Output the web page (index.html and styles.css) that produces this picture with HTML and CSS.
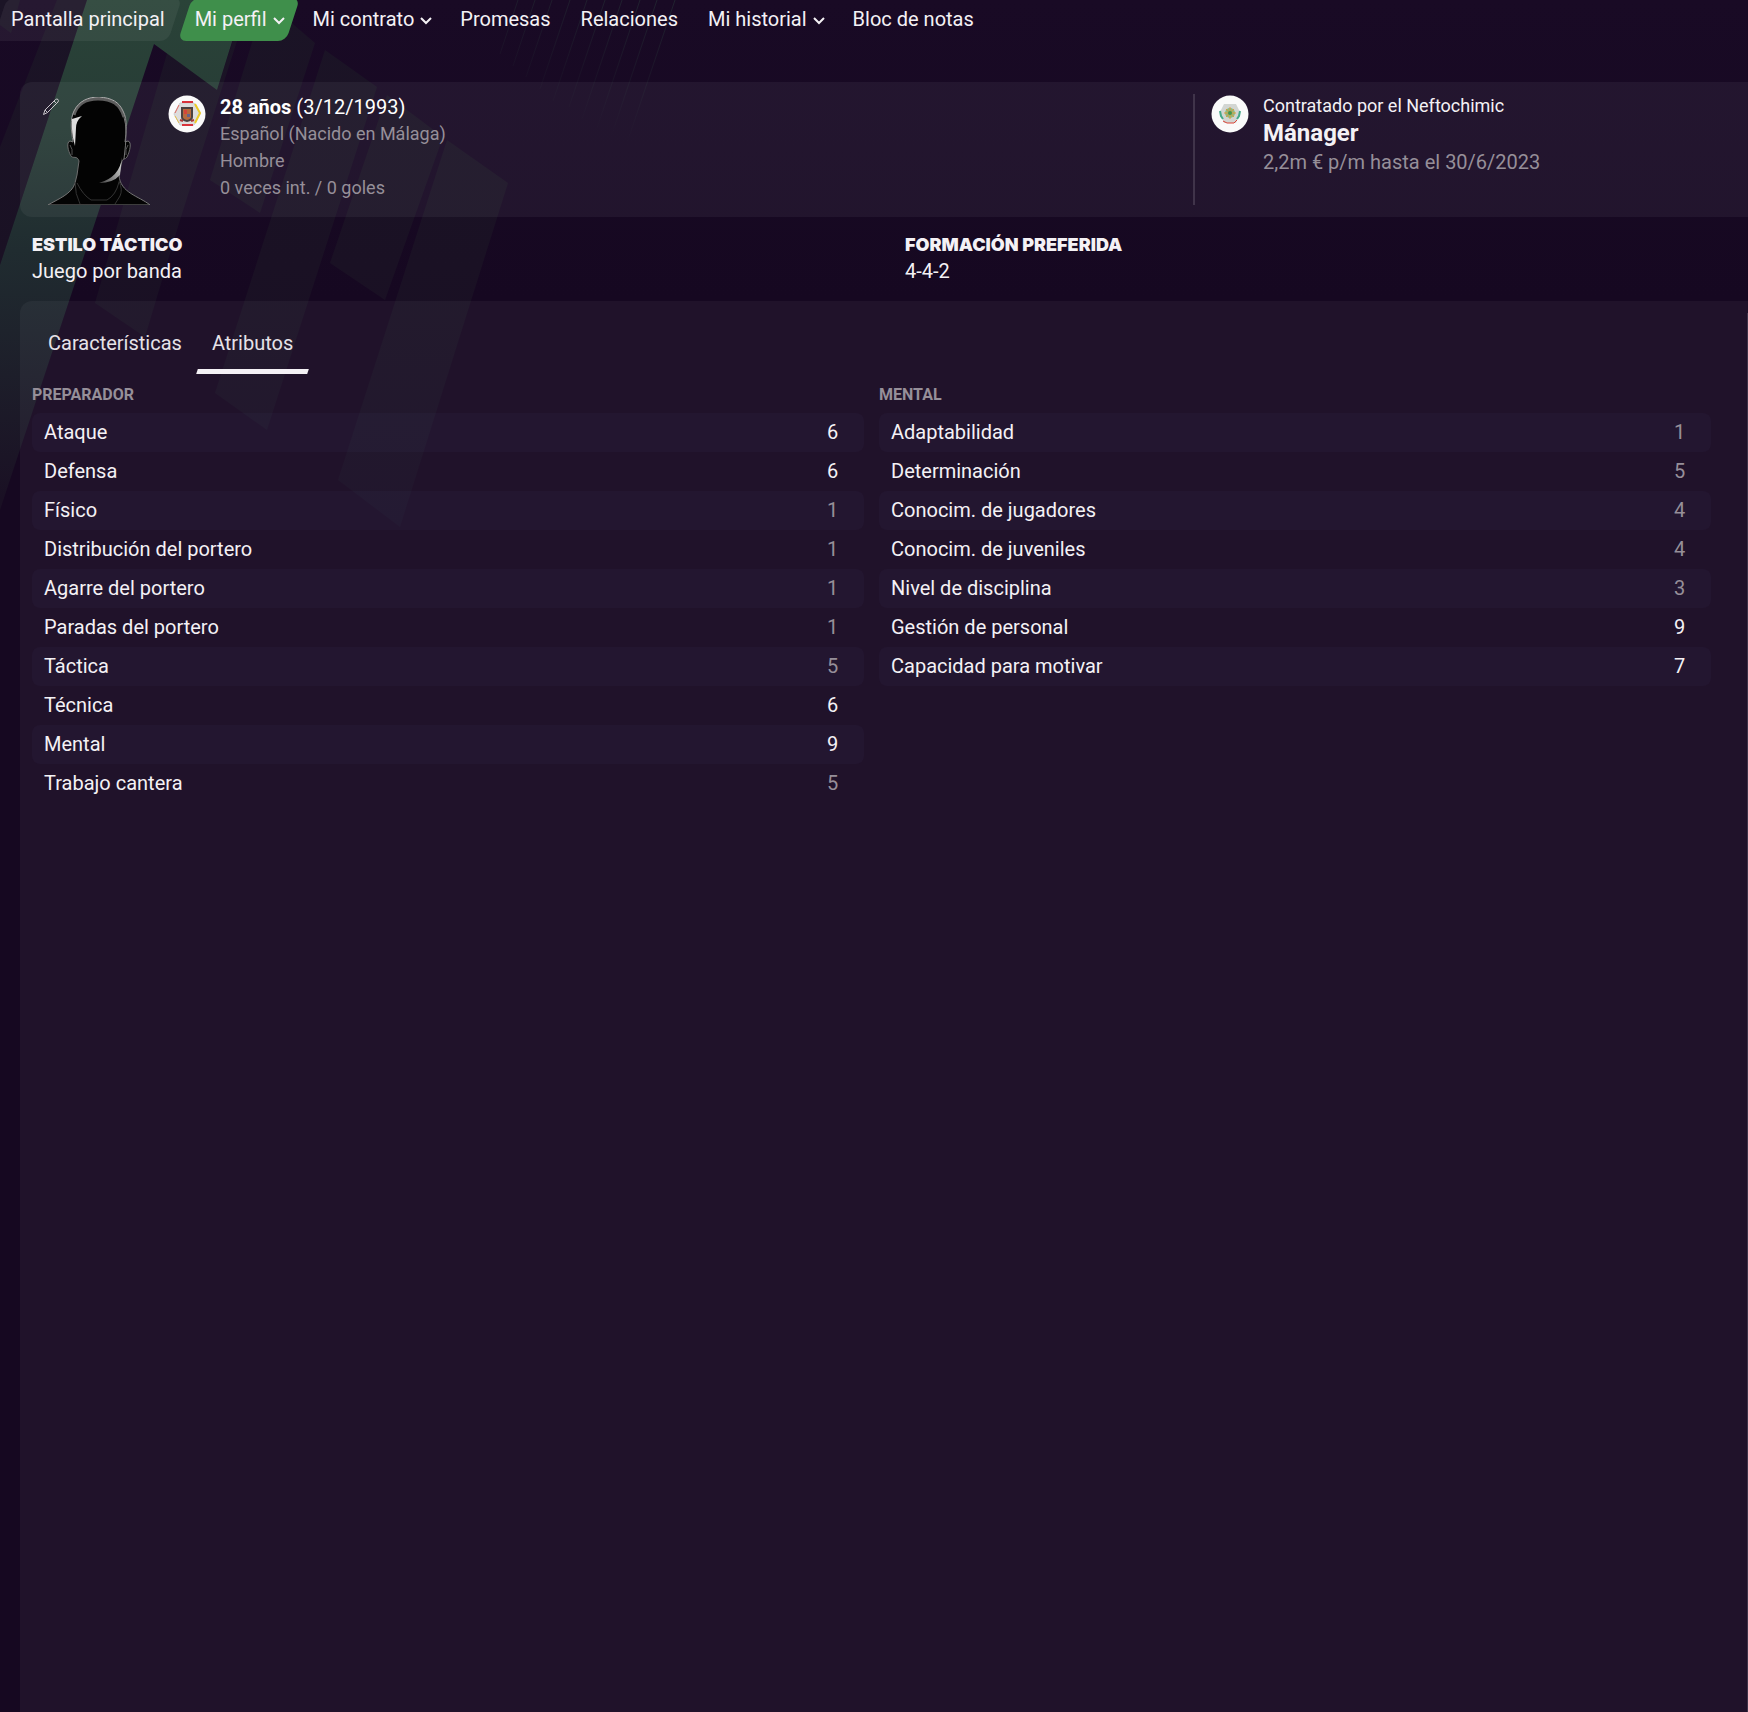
FILE: index.html
```html
<!DOCTYPE html>
<html lang="es">
<head>
    <meta charset="UTF-8">
    <meta name="viewport" content="width=device-width, initial-scale=1.0">
    <title>Mi perfil</title>
    <link rel="stylesheet" href="styles.css">
</head>
<body>
    <svg class="backdrop" width="700" height="560" viewBox="0 0 700 560" aria-hidden="true">
        <defs>
            <linearGradient id="green" gradientUnits="userSpaceOnUse" x1="0" y1="0" x2="0" y2="500">
                <stop offset="0" stop-color="#2a4338"/>
                <stop offset="0.25" stop-color="#273c36"/>
                <stop offset="0.5" stop-color="#202c30"/>
                <stop offset="1" stop-color="#1a1024"/>
            </linearGradient>
            <linearGradient id="bands" gradientUnits="userSpaceOnUse" x1="0" y1="0" x2="0" y2="530">
                <stop offset="0" stop-color="#1b1426"/>
                <stop offset="0.5" stop-color="#1a1124"/>
                <stop offset="1" stop-color="#180c24"/>
            </linearGradient>
            <linearGradient id="lines" gradientUnits="userSpaceOnUse" x1="675" y1="0" x2="627" y2="143">
                <stop offset="0" stop-color="#20222f"/>
                <stop offset="1" stop-color="#20222f" stop-opacity="0"/>
            </linearGradient>
        </defs>
        <g fill="url(#bands)">
            <path d="M0 0H20L11 33 0 25z"/>
            <path d="M57 0H87L0 265V147z"/>
            <path d="M168 50L217 90 246 0H250L180 220 145 337 95 303z"/>
            <path d="M265 0L315 43 260 213 210 180z"/>
            <path d="M325 50L377 87 267 430 215 393z"/>
            <path d="M387 95L443 137 385 300 330 263z"/>
            <path d="M447 140L508 183 400 527 338 480z"/>
        </g>
        <path fill="url(#green)" d="M87 0H245L217 90 154 44 0 510V265z"/>
        <g stroke="url(#lines)" stroke-width="1">
            <path d="M675 0l-48 143M657 0l-46 137M640 0l-44 131M622 0l-40 119M605 0l-36 107M587 0l-34 101M570 0l-30 89M552 0l-26 77M535 0l-22 66M518 0l-18 54"/>
        </g>
    </svg>

    <div class="page">
        <nav class="menu">
            <a class="menu-item visited" href="#">Pantalla principal</a>
            <a class="menu-item drop active" href="#">Mi perfil <svg class="chevron" viewBox="0 0 12 8"><path d="M1 1l5 5 5-5"/></svg></a>
            <a class="menu-item drop" href="#">Mi contrato <svg class="chevron" viewBox="0 0 12 8"><path d="M1 1l5 5 5-5"/></svg></a>
            <a class="menu-item" href="#">Promesas</a>
            <a class="menu-item" href="#">Relaciones</a>
            <a class="menu-item drop" href="#">Mi historial <svg class="chevron" viewBox="0 0 12 8"><path d="M1 1l5 5 5-5"/></svg></a>
            <a class="menu-item" href="#">Bloc de notas</a>
        </nav>

        <header class="profile">
            <div class="person">
                <div class="portrait">
                    <button class="edit" type="button" aria-label="Editar">
                        <svg viewBox="0 0 18 18"><path d="M1.500 16.500l1.500-4.500L13.500 1.500q1.500-1 2.500 0t0 2.500L5.500 14.500zM3 12l2.500 2.500M12 3l2.500 2.500"/></svg>
                    </button>
                    <svg class="face" viewBox="0 0 102 108" aria-hidden="true">
                        <defs>
                            <linearGradient id="rim" x1="0" y1="0" x2="0" y2="1">
                                <stop offset="0" stop-color="#bbb"/>
                                <stop offset="0.5" stop-color="#666"/>
                                <stop offset="1" stop-color="#777"/>
                            </linearGradient>
                            <linearGradient id="jaw" x1="1" y1="0" x2="0" y2="1">
                                <stop offset="0" stop-color="#eee"/>
                                <stop offset="1" stop-color="#444"/>
                            </linearGradient>
                        </defs>
                        <path d="M0 108C10 102 24 97 27 86L29 78 31 64C29 58 25 62 23 59 20 54 18 45 22 44L25 45C23 33 22 22 26 14 31 4 40 0 51 0 64 1 71 5 75 14 80 23 78 36 77 45L80 44C84 45 82 54 79 60 77 63 75 61 74 64L71 78C72 96 91 99 102 108z" fill="#030303" stroke="url(#rim)" stroke-width="1"/>
                        <path d="M26 18C29 7 38 2 50 2 64 2 72 7 76 20" fill="none" stroke="#999" stroke-width="3" opacity=".6"/>
                        <path d="M24 22l10-3q-6 5-6 12l-1 18q-4-13-3-27z" fill="#ddd"/>
                        <path d="M74 60q-2 20-23 26 14 0 21-8z" fill="url(#jaw)"/>
                        <path d="M76 20q4 12 0 42" fill="none" stroke="#777" stroke-width="1"/>
                        <path d="M22 48q3 4 2 10M80 48q-3 4-2 10" fill="none" stroke="#555" stroke-width="1"/>
                        <path d="M27 85q0 12 5 22M71 84q4 9 1 15l-5 8M29 86q6 12 14 17h16q9-5 12-18" fill="none" stroke="#333" stroke-width="1"/>
                    </svg>
                </div>
                <svg class="badge" viewBox="0 0 38 38" aria-hidden="true">
                    <circle cx="19" cy="19" r="18.500" fill="#fafafa"/>
                    <path d="M12 8h14l6 11-6 11H12L6 19z" fill="#ddd" stroke="#ccc" stroke-width="1"/>
                    <path d="M14 7h11M14 30h11" stroke="#d8323a" stroke-width="2"/>
                    <path d="M27 9l5 9-5 10" fill="none" stroke="#eccb28" stroke-width="2"/>
                    <path d="M11 10l-4 8" stroke="#e06a62" stroke-width="1"/>
                    <path d="M7 21l4 7" stroke="#e2be4c" stroke-width="1"/>
                    <path d="M13 12h12v10q0 4-6 5-6-1-6-5z" fill="#4b4140"/>
                    <path d="M15 14h8v8q0 2-4 3-4-1-4-3z" fill="#b66a3e"/>
                    <path d="M16 15h3v4h-3z" fill="#d4453a"/>
                    <path d="M19 19h3v3h-3z" fill="#66618c"/>
                    <path d="M12 25l3 1M26 25l-3 1" stroke="#a93a35" stroke-width="2"/>
                </svg>
                <div class="details">
                    <p class="age"><strong>28 años</strong> (3/12/1993)</p>
                    <p>Español (Nacido en Málaga)</p>
                    <p>Hombre</p>
                    <p>0 veces int. / 0 goles</p>
                </div>
            </div>
            <div class="contract">
                <svg class="badge" viewBox="0 0 38 38" aria-hidden="true">
                    <circle cx="19" cy="19" r="18.500" fill="#fafafa"/>
                    <path d="M13 9h12l4 8-4 11H13L9 17z" fill="#d2d5d2"/>
                    <path d="M9 16l1 5 2 3M29 16l-1 5-2 3" fill="none" stroke="#45a98a" stroke-width="2"/>
                    <path d="M12 26l4 2h7l3-3" fill="none" stroke="#dc4438" stroke-width="1"/>
                    <circle cx="19" cy="18" r="5" fill="#8fb97f"/>
                    <path d="M19 12v12M13 18h12M15 14l8 8M23 14l-8 8" stroke="#dd9c3b" stroke-width="1"/>
                    <circle cx="19" cy="18" r="2" fill="#3d9655"/>
                </svg>
                <div class="job">
                    <p>Contratado por el Neftochimic</p>
                    <p class="role">Mánager</p>
                    <p class="wage">2,2m € p/m hasta el 30/6/2023</p>
                </div>
            </div>
        </header>

        <section class="style">
            <div>
                <h2>ESTILO TÁCTICO</h2>
                <p>Juego por banda</p>
            </div>
            <div>
                <h2>FORMACIÓN PREFERIDA</h2>
                <p>4-4-2</p>
            </div>
        </section>

        <main class="panel">
            <div class="tabs" role="tablist">
                <button class="tab" type="button" role="tab">Características</button>
                <button class="tab selected" type="button" role="tab" aria-selected="true">Atributos</button>
            </div>
            <div class="columns">
                <table class="attributes">
                    <caption>PREPARADOR</caption>
                    <tr><th scope="row">Ataque</th><td class="good">6</td></tr>
                    <tr><th scope="row">Defensa</th><td class="good">6</td></tr>
                    <tr><th scope="row">Físico</th><td>1</td></tr>
                    <tr><th scope="row">Distribución del portero</th><td>1</td></tr>
                    <tr><th scope="row">Agarre del portero</th><td>1</td></tr>
                    <tr><th scope="row">Paradas del portero</th><td>1</td></tr>
                    <tr><th scope="row">Táctica</th><td>5</td></tr>
                    <tr><th scope="row">Técnica</th><td class="good">6</td></tr>
                    <tr><th scope="row">Mental</th><td class="good">9</td></tr>
                    <tr><th scope="row">Trabajo cantera</th><td>5</td></tr>
                </table>
                <table class="attributes">
                    <caption>MENTAL</caption>
                    <tr><th scope="row">Adaptabilidad</th><td>1</td></tr>
                    <tr><th scope="row">Determinación</th><td>5</td></tr>
                    <tr><th scope="row">Conocim. de jugadores</th><td>4</td></tr>
                    <tr><th scope="row">Conocim. de juveniles</th><td>4</td></tr>
                    <tr><th scope="row">Nivel de disciplina</th><td>3</td></tr>
                    <tr><th scope="row">Gestión de personal</th><td class="good">9</td></tr>
                    <tr><th scope="row">Capacidad para motivar</th><td class="good">7</td></tr>
                </table>
            </div>
        </main>
    </div>
</body>
</html>
```
FILE: styles.css
```css
* {
    box-sizing: border-box;
}
body {
    margin: 0;
    background: linear-gradient(#190a25, #160821 300px, #160821);
    color: #f4f1f5;
    font-family: Roboto, "Liberation Sans", sans-serif;
    font-size: 20px;
    line-height: 26px;
}
p, h2 {
    margin: 0;
}
.backdrop {
    position: absolute;
    top: 0;
    left: 0;
}
.page {
    position: relative;
    z-index: 0;
    min-height: 100vh;
    display: flex;
    flex-direction: column;
}

/* top menu */
.menu {
    display: flex;
    height: 41px;
    margin-bottom: 41px;
}
.menu-item {
    position: relative;
    display: flex;
    align-items: center;
    gap: 6px;
    padding: 0 15px 4px;
    color: #f4f1f5;
    text-decoration: none;
    white-space: nowrap;
}
.menu-item.drop {
    padding: 0 13px 4px 15px;
}
.menu-item.visited {
    padding-left: 11px;
}
.visited::before,
.active::before {
    content: "";
    position: absolute;
    inset: -2px 5px 0 5px;
    z-index: -1;
    border-radius: 8px;
    transform: skewX(-18deg);
}
.visited::before {
    left: 0;
    background: rgba(255, 255, 255, 0.06);
}
.active::before {
    background: #3f8f4b;
}
.chevron {
    width: 12px;
    height: 8px;
    margin-top: 4px;
    fill: none;
    stroke: #f4f1f5;
    stroke-width: 2;
}

/* profile header */
.profile {
    display: grid;
    grid-template-columns: 1151fr 555fr;
    height: 135px;
    margin-left: 20px;
    padding: 12px 0 12px 22px;
    border-radius: 12px 0 0 12px;
    background: rgba(255, 255, 255, 0.05);
}
.person {
    display: flex;
}
.portrait {
    display: flex;
    width: 126px;
}
.edit {
    width: 18px;
    height: 18px;
    margin: 4px -12px 0 0;
    padding: 0;
    border: 0;
    background: none;
}
.edit svg {
    display: block;
    fill: none;
    stroke: #c9c6cb;
    stroke-width: 1;
}
.face {
    width: 102px;
    height: 108px;
    margin-top: 3px;
}
.badge {
    flex: none;
    width: 38px;
    height: 38px;
    margin: 1px 14px 0 0;
}
.details {
    color: #968f99;
    font-size: 18px;
    line-height: 27px;
}
.age {
    color: #fff;
    font-size: 20px;
    line-height: 26px;
}
.contract {
    display: flex;
    padding-left: 16px;
    border-left: 2px solid #40344a;
}
.job {
    font-size: 18px;
    line-height: 24px;
}
.role {
    font-size: 24px;
    font-weight: bold;
    line-height: 30px;
}
.wage {
    color: #968f99;
    font-size: 20px;
    line-height: 28px;
}

/* tactical style */
.style {
    display: grid;
    grid-template-columns: 1fr 1fr;
    padding: 15px 0 17px 32px;
    column-gap: 30px;
}
.style h2 {
    font-family: Inter, "Liberation Sans", sans-serif;
    font-size: 18px;
    font-weight: 900;
    line-height: 26px;
}

/* attributes panel */
.panel {
    position: relative;
    flex: 1;
    margin-left: 20px;
    padding: 18px 37px 0 12px;
    border-radius: 12px 0 0 0;
    background: rgba(255, 255, 255, 0.045);
}
/* scrollbar track */
.panel::after {
    content: "";
    position: absolute;
    inset: 12px 0 0 auto;
    width: 1px;
    background: #40344a;
}
.tabs {
    display: flex;
    padding-left: 1px;
}
.tab {
    position: relative;
    height: 55px;
    padding: 0 15px 7px;
    border: 0;
    background: none;
    color: #e6e2e8;
    font: inherit;
}
.tab.selected::after {
    content: "";
    position: absolute;
    inset: auto 0 0 0;
    height: 5px;
    background: #f4f1f5;
    transform: skewX(-18deg);
}
.columns {
    display: grid;
    grid-template-columns: 1fr 1fr;
    gap: 15px;
    align-items: start;
}
.attributes {
    width: 100%;
    border-collapse: separate;
    border-spacing: 0;
}
.attributes caption {
    padding: 8px 0 5px;
    color: #968f99;
    font-size: 16px;
    font-weight: bold;
    text-align: left;
}
.attributes th,
.attributes td {
    height: 39px;
    padding: 0 12px 2px;
    font-weight: normal;
    text-align: left;
}
.attributes td {
    width: 49px;
    color: #968f99;
}
.attributes td.good {
    color: #f4f1f5;
}
.attributes tr:nth-child(odd) > * {
    background: rgba(130, 140, 200, 0.04);
}
.attributes th {
    border-radius: 8px 0 0 8px;
}
.attributes td {
    border-radius: 0 8px 8px 0;
}
```
